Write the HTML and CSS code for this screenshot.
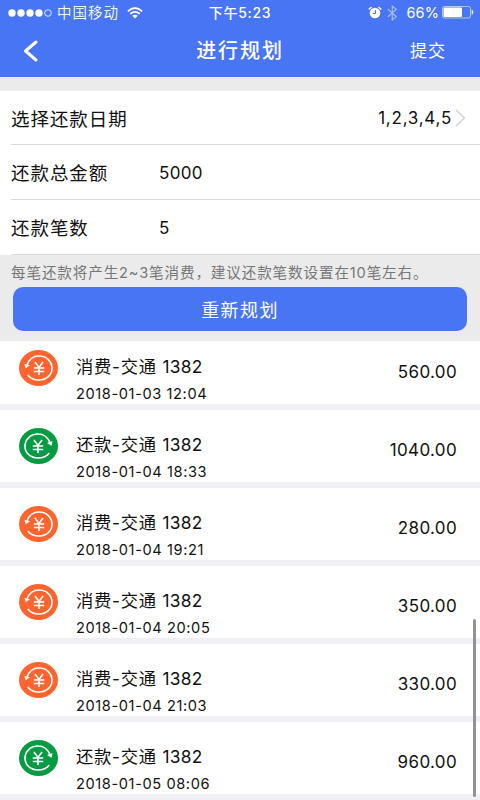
FILE: index.html
```html
<!DOCTYPE html>
<html lang="zh-CN">
<head>
<meta charset="utf-8">
<title>进行规划</title>
<link rel="stylesheet" href="styles.css">
</head>
<body>
<svg class="defs" aria-hidden="true">
  <symbol id="yen" viewBox="0 0 39 36">
    <path d="M15.5 12l4 5.500 4-5.500M19.500 17.500v7.500M14.300 18h10.400M14.300 21.500h10.400" fill="none" stroke="#fff" stroke-width="1.600"/>
  </symbol>
  <symbol id="spend" viewBox="0 0 39 36">
    <ellipse cx="19.5" cy="18" rx="19.5" ry="18" fill="#fd6530"/>
    <path d="M8 15C10 9.500 14.500 6 20 6c7.500 0 13 5.400 13 12.200S27.500 30 20 30c-4.800 0-8.700-1.700-11.300-5" fill="none" stroke="#fff" stroke-width="1.600"/>
    <path d="M5.500 14l5.500 1.200-4.300 3z" fill="#fff"/>
    <use href="#yen" x=".5" width="39" height="36"/>
  </symbol>
  <symbol id="repay" viewBox="0 0 39 36">
    <ellipse cx="19.5" cy="18" rx="19.5" ry="18" fill="#059b43"/>
    <path d="M31 15C29 9.500 24.500 6 19 6 11.500 6 6 11.400 6 18.200S11.500 30 19 30c4.800 0 8.700-1.700 11.300-5" fill="none" stroke="#fff" stroke-width="1.600"/>
    <path d="M33.500 13l-5.500 2 4.500 2.700z" fill="#fff"/>
    <use href="#yen" x="-.5" width="39" height="36"/>
  </symbol>
</svg>
<header>
  <div class="status">
    <div class="left">
      <svg width="44" height="10"><g fill="#fff"><circle cx="4" cy="5" r="3.700"/><circle cx="13" cy="5" r="3.700"/><circle cx="22" cy="5" r="3.700"/><circle cx="31" cy="5" r="3.700"/></g><circle cx="40" cy="5" r="3.300" fill="none" stroke="#fff" stroke-width=".8"/></svg>
      <span class="carrier">中国移动</span>
      <svg class="wifi" width="16" height="12" viewBox="0 0 16 12"><path d="M.8 4.300Q8-2.300 15.200 4.300M3.200 6.900Q8 2.800 12.800 6.900" fill="none" stroke="#fff" stroke-width="1.700"/><path d="M5.300 8.700Q8 6.600 10.700 8.700L8 11.500z" fill="#fff"/></svg>
    </div>
    <span class="clock">下午5:23</span>
    <div class="right">
      <svg width="14" height="13" viewBox="0 0 14 13"><circle cx="7" cy="7" r="5.300" fill="#fff"/><path d="M.8 3.500L3.500 1M10.500 1l2.700 2.500" stroke="#fff" stroke-width="1.500"/><path d="M7.500 4v3.500H4.800" fill="none" stroke="#4875f3"/></svg>
      <svg class="bt" width="11" height="16" viewBox="0 0 11 16"><path d="M.8 4.300l8.500 7.200-4 3.500V1l4 3.500-8.500 7.200" fill="none" stroke="#a3bafa" stroke-width="1.200"/></svg>
      <span class="pct">66%</span>
      <svg width="32" height="13" viewBox="0 0 32 13"><rect x=".5" y=".5" width="28" height="11.500" rx="2" fill="none" stroke="#b6c6ef"/><rect x="1.500" y="1.500" width="18.500" height="9.500" rx="1" fill="#fff"/><path d="M30 4q2 2.200 0 4.500z" fill="#fff" stroke="#fff" stroke-width=".5"/></svg>
    </div>
  </div>
  <nav>
    <svg class="back" width="14" height="22" viewBox="0 0 14 22"><path d="M12 2L1.500 11l10.500 9" fill="none" stroke="#fff" stroke-width="3" stroke-linecap="round" stroke-linejoin="round"/></svg>
    <h1>进行规划</h1>
    <span class="submit">提交</span>
  </nav>
</header>
<section class="form">
  <div class="field first"><span class="label">选择还款日期</span><span class="dates">1,2,3,4,5</span><svg width="11" height="18" viewBox="0 0 11 18"><path d="M1 1l8.500 8L1 17" fill="none" stroke="#ccc" stroke-width="1.200"/></svg></div>
  <div class="field"><span class="label">还款总金额</span><span class="value">5000</span></div>
  <div class="field last"><span class="label">还款笔数</span><span class="value">5</span></div>
</section>
<p class="hint">每笔还款将产生2~3笔消费，建议还款笔数设置在10笔左右。</p>
<button>重新规划</button>
<main>
  <article class="top"><svg><use href="#spend"/></svg><div class="info"><h2>消费-交通 <b>1382</b></h2><time>2018-01-03 12:04</time></div><span class="amount">560.00</span></article>
  <article><svg><use href="#repay"/></svg><div class="info"><h2>还款-交通 <b>1382</b></h2><time>2018-01-04 18:33</time></div><span class="amount">1040.00</span></article>
  <article><svg><use href="#spend"/></svg><div class="info"><h2>消费-交通 <b>1382</b></h2><time>2018-01-04 19:21</time></div><span class="amount">280.00</span></article>
  <article><svg><use href="#spend"/></svg><div class="info"><h2>消费-交通 <b>1382</b></h2><time>2018-01-04 20:05</time></div><span class="amount">350.00</span></article>
  <article><svg><use href="#spend"/></svg><div class="info"><h2>消费-交通 <b>1382</b></h2><time>2018-01-04 21:03</time></div><span class="amount">330.00</span></article>
  <article><svg><use href="#repay"/></svg><div class="info"><h2>还款-交通 <b>1382</b></h2><time>2018-01-05 08:06</time></div><span class="amount">960.00</span></article>
</main>
<div class="scrollbar"></div>
</body>
</html>
```
FILE: styles.css
```css
* { box-sizing: border-box; margin: 0; padding: 0; }
body {
  width: 480px; height: 800px; overflow: hidden; position: relative;
  background: #ebebeb; color: #111;
  font-family: Inter, "Noto Sans CJK SC", sans-serif;
}
.defs { position: absolute; width: 0; height: 0; }
svg { display: block; flex: none; }
span, h1, h2, p, time { white-space: nowrap; }
header { height: 77px; background: #4875f3; color: #fff; }
.status { height: 25px; display: grid; grid-template-columns: 1fr auto 1fr; align-items: center; padding: 0 6px 0 8px; font-size: 14px; }
.left, .right { display: flex; align-items: center; }
.right { justify-content: flex-end; }
.carrier { margin-left: 5px; padding-bottom: 2px; font-size: 14.500px; letter-spacing: 1px; font-weight: 350; }
.wifi { margin-left: 8px; }
.clock { padding: 0 1px 2px 0; font-size: 14px; font-weight: 500; letter-spacing: .7px; margin-right: 1px; }
.bt { margin-left: 5px; }
.pct { margin: 0 3px 0 8px; font-size: 14.500px; letter-spacing: .1px; }
nav { height: 52px; display: grid; grid-template-columns: 1fr auto 1fr; align-items: center; padding: 0 34px 0 24px; }
h1 { font-size: 20px; font-weight: 500; letter-spacing: 1.900px; line-height: 30px; margin: 0 -5px 0 5px; }
.submit { justify-self: end; padding-bottom: 3px; font-size: 17px; letter-spacing: 1px; }
.form { margin-top: 14px; background: #fff; padding-left: 11px; }
.field { display: flex; align-items: center; height: 55px; border-bottom: 1px solid #dadada; }
.field.first { height: 54px; padding-right: 14px; }
.field.last { height: 55px; }
.label { width: 148px; font-size: 18.500px; letter-spacing: .95px; }
.value { font-size: 17px; letter-spacing: .3px; padding-top: 1px; }
.dates { margin: 0 3px 0 auto; font-size: 17px; letter-spacing: .75px; padding-top: 1px; }
.hint { height: 32px; padding: 2px 0 0 11px; line-height: 32px; font-size: 14.600px; letter-spacing: .85px; color: #777; }
button { display: block; width: 454px; height: 44px; margin: 0 0 10px 13px; border: 0; border-radius: 10px; background: #4875f3; color: #fff; font: 18px "Noto Sans CJK SC", sans-serif; letter-spacing: 1.400px; }
article { display: flex; height: 78px; border-bottom: 6px solid #efeff5; padding: 18px 23px 0 19px; background: #fff; }
article.top { height: 69px; padding-top: 9px; }
article svg { width: 39px; height: 36px; }
.info { margin-left: 18px; }
h2 { font-size: 17.300px; font-weight: 400; line-height: 24px; margin-top: 5px; letter-spacing: .75px; }
h2 b { font-weight: 400; letter-spacing: .3px; }
time { display: block; margin-top: 5px; font-size: 14.600px; line-height: 20px; letter-spacing: .6px; }
.amount { margin-left: auto; font-size: 17px; line-height: 24px; padding-top: 10px; letter-spacing: .35px; }
.scrollbar { position: absolute; right: 4px; top: 619px; width: 3px; height: 178px; border-radius: 2px; background: #929292; }
```
